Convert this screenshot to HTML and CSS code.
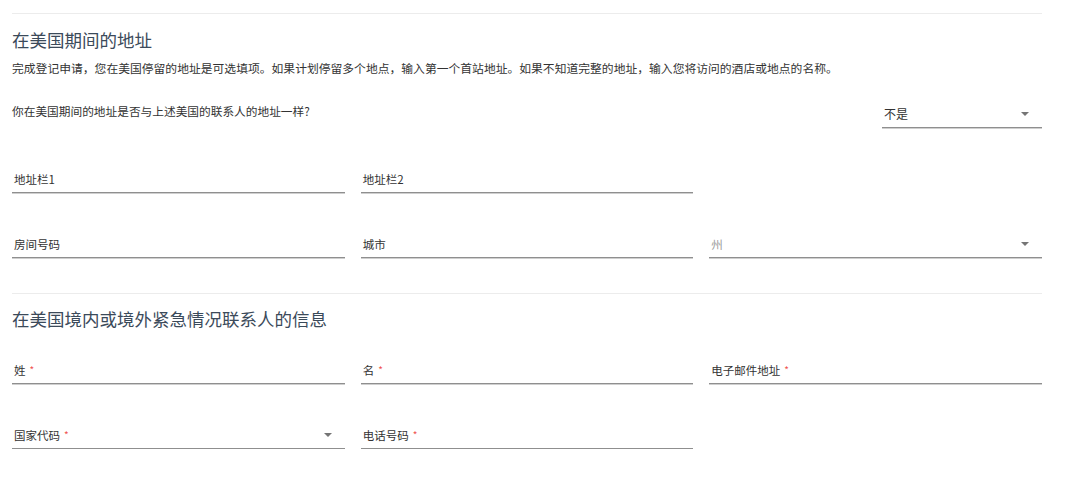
FILE: index.html
```html
<!DOCTYPE html>
<html lang="zh-CN">
<head>
    <meta charset="UTF-8">
    <meta name="viewport" content="width=device-width, initial-scale=1.0">
    <title>在美国期间的地址</title>
    <link rel="stylesheet" href="styles.css">
</head>
<body>
    <div class="page">
        <section class="section section-address">
            <h2 class="section-title">在美国期间的地址</h2>
            <p class="section-desc">完成登记申请，您在美国停留的地址是可选填项。如果计划停留多个地点，输入第一个首站地址。如果不知道完整的地址，输入您将访问的酒店或地点的名称。</p>

            <div class="question-row">
                <div class="question">你在美国期间的地址是否与上述美国的联系人的地址一样?</div>
                <div class="field field-select field-small">
                    <span class="field-value">不是</span>
                    <span class="caret"></span>
                </div>
            </div>

            <div class="field-grid">
                <div class="field"><span class="field-label">地址栏1</span></div>
                <div class="field"><span class="field-label">地址栏2</span></div>
                <div class="field-empty"></div>

                <div class="field"><span class="field-label">房间号码</span></div>
                <div class="field"><span class="field-label">城市</span></div>
                <div class="field field-select">
                    <span class="field-label placeholder">州</span>
                    <span class="caret"></span>
                </div>
            </div>
        </section>

        <section class="section section-contact">
            <h2 class="section-title">在美国境内或境外紧急情况联系人的信息</h2>

            <div class="field-grid">
                <div class="field"><span class="field-label">姓<span class="req">*</span></span></div>
                <div class="field"><span class="field-label">名<span class="req">*</span></span></div>
                <div class="field"><span class="field-label">电子邮件地址<span class="req">*</span></span></div>

                <div class="field field-select">
                    <span class="field-label">国家代码<span class="req">*</span></span>
                    <span class="caret"></span>
                </div>
                <div class="field"><span class="field-label">电话号码<span class="req">*</span></span></div>
                <div class="field-empty"></div>
            </div>
        </section>
    </div>
</body>
</html>
```

FILE: styles.css
```css
* {
    margin: 0;
    padding: 0;
    box-sizing: border-box;
}

body {
    font-family: "Noto Sans CJK SC", "Noto Sans", "Liberation Sans", sans-serif;
    background: #fff;
    color: #333;
}

.page {
    width: 1042px;
    padding-left: 12px;
    padding-top: 13px;
}

.section {
    border-top: 1px solid #ececec;
}

.section-title {
    font-size: 17.5px;
    font-weight: 400;
    line-height: 26px;
    color: #3b4a5a;
    margin-top: 13px;
}

.section-desc {
    font-size: 11.8px;
    line-height: 18px;
    color: #333;
    margin-top: 6px;
}

.question-row {
    display: flex;
    justify-content: space-between;
    align-items: flex-start;
    margin-top: 23px;
}

.question {
    font-size: 11.7px;
    line-height: 18px;
    padding-top: 2px;
    color: #333;
}

.field-grid {
    display: grid;
    grid-template-columns: repeat(3, 1fr);
    column-gap: 16px;
    row-gap: 32px;
    margin-top: 32px;
}

.section-address .field-grid {
    margin-bottom: 35px;
}

.section-contact .section-title {
    margin-top: 12px;
}

.section-contact .field-grid {
    margin-top: 19px;
}

.field {
    position: relative;
    padding: 10px 2px 4px;
    border-bottom: 1px solid #8f8f8f;
    box-shadow: 0 1px 0 #cfcfcf;
    height: 33px;
}

.field-small {
    width: 160px;
    height: 28px;
    padding-top: 5px;
}

.field-label,
.field-value {
    display: block;
    font-size: 11.5px;
    line-height: 18px;
    color: #333;
}

.field-value {
    font-size: 12px;
}

.placeholder {
    color: #9a9a9a;
}

.req {
    color: #ef5350;
    font-size: 10px;
    margin-left: 4px;
    vertical-align: 1px;
}

.caret {
    position: absolute;
    right: 13px;
    top: 17px;
    width: 0;
    height: 0;
    border-left: 4px solid transparent;
    border-right: 4px solid transparent;
    border-top: 4px solid #757575;
}

.field-small .caret {
    top: 12px;
}
```
